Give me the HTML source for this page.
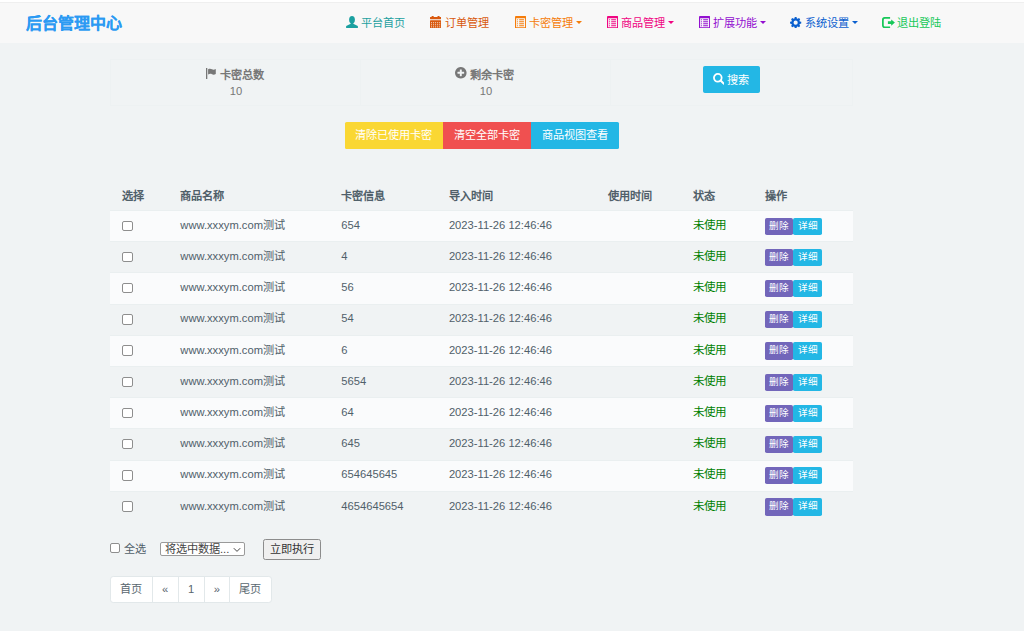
<!DOCTYPE html>
<html lang="zh-CN">
<head>
<meta charset="utf-8">
<title>后台管理中心</title>
<style>
*{box-sizing:border-box;}
html,body{margin:0;padding:0;}
body{width:1024px;height:631px;overflow:hidden;background:#f0f3f4;color:#50606a;
  font-family:"Liberation Sans",sans-serif;font-size:11.2px;line-height:16px;position:relative;}
svg{display:block;}
.topw{position:absolute;left:0;top:0;width:1024px;height:2px;background:#fff;}
.nav{position:absolute;left:0;top:2px;width:1024px;height:41.3px;background:#f8f8f8;border-top:1px solid #efefef;}
.brand{position:absolute;left:25.6px;top:9px;-webkit-text-stroke:0.1px #2b9af3;font-size:16px;line-height:24px;font-weight:bold;color:#2b9af3;white-space:nowrap;}
.ni{position:absolute;top:12px;height:16px;line-height:16px;white-space:nowrap;font-size:11.2px;}
.ni .ic{position:absolute;left:0;top:0;display:block;}
.ni span{position:absolute;left:14.6px;top:0;}
.caret{position:absolute;top:6.4px;width:0;height:0;border-top:3.2px solid;border-left:3.2px solid transparent;border-right:3.2px solid transparent;}

.stats{position:absolute;left:110px;top:59px;width:743px;height:46.5px;border:1px solid #edf1f2;}
.stats .dv{position:absolute;top:0;width:1px;height:100%;background:#edf1f2;}
.cell{position:absolute;top:0;height:46px;text-align:center;}
.cell .t{position:absolute;top:6.8px;left:0;width:100%;padding-right:2px;font-weight:bold;color:#777;white-space:nowrap;}
.cell .n{position:absolute;top:22.6px;left:0;width:100%;color:#777;}
.cell .t svg{display:inline-block;vertical-align:0px;margin-right:0;position:relative;left:-0.6px;}
.btn{display:inline-block;color:#fff;text-align:center;white-space:nowrap;border-radius:1.6px;}
.btn-info{background:#23b7e5;border:0.8px solid #23b7e5;}
.sbtn{position:absolute;left:702.8px;top:66px;width:57.3px;height:27px;line-height:25.4px;}
.sbtn svg{position:absolute;left:8.9px;top:6.2px;}
.sbtn span{position:absolute;left:23.2px;top:0.6px;}
.grp{position:absolute;left:344.8px;top:121.7px;height:27px;white-space:nowrap;font-size:0;}
.grp .btn{font-size:11.2px;height:27px;line-height:27.6px;border-radius:0;vertical-align:top;}
.grp .b1{width:98.4px;background:#fad733;border-radius:1.6px 0 0 1.6px;}
.grp .b2{width:87.6px;background:#f05050;}
.grp .b3{width:88.2px;background:#23b7e5;border-radius:0 1.6px 1.6px 0;}

table{position:absolute;left:110.3px;top:178.9px;width:742.7px;border-collapse:separate;border-spacing:0;table-layout:fixed;}
th,td{padding:0 0 0 12px;text-align:left;vertical-align:middle;white-space:nowrap;overflow:hidden;}
th{height:31.2px;font-weight:bold;color:#50606a;padding-top:3px;}
td{height:31.2px;padding-bottom:2.6px;border-top:1px solid #eaeff0;}
td:first-child,td:last-child{padding-bottom:0.6px;}
tbody tr:nth-child(odd){background:#fafbfc;}
.cb{display:block;width:10.4px;height:10.4px;border:1px solid #8e8e8e;border-radius:2px;background:#fff;}
.ok{color:green;font-size:11.5px;}
.xs{font-weight:normal;display:inline-block;vertical-align:top;height:17.2px;line-height:15.6px;font-size:9.6px;color:#fff;text-align:center;width:28.5px;}
.xs.p{background:#7266ba;border-radius:1.8px;}
.xs.i{background:#23b7e5;border-radius:1.8px;}
.ops{font-size:0;display:block;margin-top:0.7px;}

.bulk{position:absolute;left:110px;top:538px;height:22px;}
.bulk .cb{position:absolute;left:0;top:4.6px;}
.bulk .lab{position:absolute;left:13.6px;top:2.6px;white-space:nowrap;}
.sel{position:absolute;left:50.4px;top:4.2px;width:84.2px;height:14.2px;border:1px solid #9a9a9a;border-radius:2px;background:#fff;color:#444;line-height:12.2px;white-space:nowrap;overflow:hidden;}
.sel span{position:absolute;left:3.6px;top:-0.4px;}
.sel svg{position:absolute;right:3px;top:3.6px;}
.exe{position:absolute;left:153.2px;top:1px;width:57.6px;height:21px;border:1px solid #8c8c8c;border-radius:2.4px;background:#efefef;color:#333;text-align:center;line-height:19px;white-space:nowrap;}

.pg{position:absolute;left:110.2px;top:575.5px;height:27px;font-size:0;white-space:nowrap;}
.pg a{display:inline-block;vertical-align:top;height:27px;line-height:25.4px;font-size:11.2px;color:#58666e;background:#fff;border:0.8px solid #e2e8ea;margin-left:-0.8px;text-align:center;}
.pg a:first-child{margin-left:0;border-radius:3.2px 0 0 3.2px;}
.pg a:last-child{border-radius:0 3.2px 3.2px 0;}

</style>
</head>
<body>
<div class="topw"></div>
<div class="nav">
<div class="brand">后台管理中心</div>
<div class="ni" style="left:346.2px;color:#1ba0a0"><i class="ic" style="top:0.8px"><svg width="12" height="12.4" viewBox="0 0 12 12.4"><g fill="#1ba0a0"><ellipse cx="6" cy="3.8" rx="2.9" ry="3.8"/><path d="M.1 12.4V10.5Q.1 10 .7 9.7L4.7 7.8V6.3H7.3V7.8L11.3 9.7Q11.9 10 11.9 10.5V12.4Z"/></g></svg></i><span>平台首页</span></div>
<div class="ni" style="left:430.0px;color:#d9580d"><i class="ic" style="top:0.8px"><svg width="11.2" height="12.4" viewBox="0 0 11 12.2"><g fill="#d9580d"><rect x="1.6" y="0" width="2" height="2" rx=".5"/><rect x="7.4" y="0" width="2" height="2" rx=".5"/><rect x="0" y="0.9" width="11" height="2.2" rx=".4"/><rect x="0" y="4.2" width="11" height="8" rx=".6"/></g><rect x="1.00" y="6.10" width="1" height="1" fill="#f8f8f8" opacity=".85"/><rect x="3.00" y="6.10" width="1" height="1" fill="#f8f8f8" opacity=".85"/><rect x="5.00" y="6.10" width="1" height="1" fill="#f8f8f8" opacity=".85"/><rect x="7.00" y="6.10" width="1" height="1" fill="#f8f8f8" opacity=".85"/><rect x="9.00" y="6.10" width="1" height="1" fill="#f8f8f8" opacity=".85"/><rect x="1.00" y="8.15" width="1" height="1" fill="#f8f8f8" opacity=".85"/><rect x="3.00" y="8.15" width="1" height="1" fill="#f8f8f8" opacity=".85"/><rect x="5.00" y="8.15" width="1" height="1" fill="#f8f8f8" opacity=".85"/><rect x="7.00" y="8.15" width="1" height="1" fill="#f8f8f8" opacity=".85"/><rect x="9.00" y="8.15" width="1" height="1" fill="#f8f8f8" opacity=".85"/><rect x="1.00" y="10.20" width="1" height="1" fill="#f8f8f8" opacity=".85"/><rect x="3.00" y="10.20" width="1" height="1" fill="#f8f8f8" opacity=".85"/><rect x="5.00" y="10.20" width="1" height="1" fill="#f8f8f8" opacity=".85"/><rect x="7.00" y="10.20" width="1" height="1" fill="#f8f8f8" opacity=".85"/><rect x="9.00" y="10.20" width="1" height="1" fill="#f8f8f8" opacity=".85"/></svg></i><span>订单管理</span></div>
<div class="ni" style="left:514.9px;color:#f57c0a"><i class="ic" style="top:0.8px"><svg width="11.2" height="12.4" viewBox="0 0 11 12.2"><g fill="#f57c0a"><path fill-rule="evenodd" d="M.9 0H10.1Q11 0 11 .9V11.3Q11 12.2 10.1 12.2H.9Q0 12.2 0 11.3V.9Q0 0 .9 0ZM1.1 2.1V11.1H9.9V2.1Z"/><rect x="1.9" y="3.15" width="1.1" height="1.05" rx=".5"/><rect x="4.0" y="3.15" width="5" height="1.05" rx=".5"/><rect x="1.9" y="5.15" width="1.1" height="1.05" rx=".5"/><rect x="4.0" y="5.15" width="5" height="1.05" rx=".5"/><rect x="1.9" y="7.15" width="1.1" height="1.05" rx=".5"/><rect x="4.0" y="7.15" width="5" height="1.05" rx=".5"/><rect x="1.9" y="9.15" width="1.1" height="1.05" rx=".5"/><rect x="4.0" y="9.15" width="5" height="1.05" rx=".5"/></g></svg></i><span>卡密管理</span><i class="caret" style="left:61.6px"></i></div>
<div class="ni" style="left:606.9px;color:#f00582"><i class="ic" style="top:0.8px"><svg width="11.2" height="12.4" viewBox="0 0 11 12.2"><g fill="#f00582"><path fill-rule="evenodd" d="M.9 0H10.1Q11 0 11 .9V11.3Q11 12.2 10.1 12.2H.9Q0 12.2 0 11.3V.9Q0 0 .9 0ZM1.1 2.1V11.1H9.9V2.1Z"/><rect x="1.9" y="3.15" width="1.1" height="1.05" rx=".5"/><rect x="4.0" y="3.15" width="5" height="1.05" rx=".5"/><rect x="1.9" y="5.15" width="1.1" height="1.05" rx=".5"/><rect x="4.0" y="5.15" width="5" height="1.05" rx=".5"/><rect x="1.9" y="7.15" width="1.1" height="1.05" rx=".5"/><rect x="4.0" y="7.15" width="5" height="1.05" rx=".5"/><rect x="1.9" y="9.15" width="1.1" height="1.05" rx=".5"/><rect x="4.0" y="9.15" width="5" height="1.05" rx=".5"/></g></svg></i><span>商品管理</span><i class="caret" style="left:61.6px"></i></div>
<div class="ni" style="left:698.9px;color:#930fd0"><i class="ic" style="top:0.8px"><svg width="11.2" height="12.4" viewBox="0 0 11 12.2"><g fill="#930fd0"><path fill-rule="evenodd" d="M.9 0H10.1Q11 0 11 .9V11.3Q11 12.2 10.1 12.2H.9Q0 12.2 0 11.3V.9Q0 0 .9 0ZM1.1 2.1V11.1H9.9V2.1Z"/><rect x="1.9" y="3.15" width="1.1" height="1.05" rx=".5"/><rect x="4.0" y="3.15" width="5" height="1.05" rx=".5"/><rect x="1.9" y="5.15" width="1.1" height="1.05" rx=".5"/><rect x="4.0" y="5.15" width="5" height="1.05" rx=".5"/><rect x="1.9" y="7.15" width="1.1" height="1.05" rx=".5"/><rect x="4.0" y="7.15" width="5" height="1.05" rx=".5"/><rect x="1.9" y="9.15" width="1.1" height="1.05" rx=".5"/><rect x="4.0" y="9.15" width="5" height="1.05" rx=".5"/></g></svg></i><span>扩展功能</span><i class="caret" style="left:61.6px"></i></div>
<div class="ni" style="left:790.4px;color:#0b60cf"><i class="ic" style="top:1.5px"><svg width="11.3" height="11.3" viewBox="0 0 11.3 11.3"><path fill="#0b60cf" fill-rule="evenodd" d="M4.39 1.54L4.81 0.06L6.49 0.06L6.91 1.54L7.67 1.85L9.01 1.11L10.19 2.29L9.45 3.63L9.76 4.39L11.24 4.81L11.24 6.49L9.76 6.91L9.45 7.67L10.19 9.01L9.01 10.19L7.67 9.45L6.91 9.76L6.49 11.24L4.81 11.24L4.39 9.76L3.63 9.45L2.29 10.19L1.11 9.01L1.85 7.67L1.54 6.91L0.06 6.49L0.06 4.81L1.54 4.39L1.85 3.63L1.11 2.29L2.29 1.11L3.63 1.85ZM3.55 5.65A2.10 2.10 0 1 0 7.75 5.65A2.10 2.10 0 1 0 3.55 5.65Z"/></svg></i><span>系统设置</span><i class="caret" style="left:61.6px"></i></div>
<div class="ni" style="left:882.1px;color:#16c858"><i class="ic" style="top:1.8px"><svg width="13" height="11.2" viewBox="0 0 13 11.2"><g fill="#16c858"><path d="M8.1 0H2.6Q0 0 0 2.6V8.6Q0 11.2 2.6 11.2H8.1V9.5H2.9Q1.75 9.5 1.75 8.3V2.9Q1.75 1.7 2.9 1.7H8.1Z"/><path d="M5.9 4.15H9.2V2.4L12.9 5.55L9.2 8.7V6.95H5.9Z"/></g></svg></i><span>退出登陆</span></div>
</div>

<div class="stats">
<div class="dv" style="left:249px"></div>
<div class="dv" style="left:498.6px"></div>
<div class="cell" style="left:0;width:250px"><div class="t"><svg width="10.4" height="11.2" viewBox="0 0 10.4 11.2"><g fill="#777"><rect x="0" y="0" width="1.3" height="11"/><path d="M2.1 1.3C3.6 .5 4.8 .7 6 1.3C7.2 1.9 8.4 1.7 9.8 .9V6C8.4 6.9 7.2 6.9 6 6.3C4.8 5.7 3.6 5.7 2.1 6.5Z"/></g></svg> 卡密总数</div><div class="n">10</div></div>
<div class="cell" style="left:250px;width:250px"><div class="t"><svg width="11.6" height="11.6" viewBox="0 -128 1536 1536"><path fill="#777" transform="translate(0,1280) scale(1,-1)" d="M1216 576V704Q1216 730 1197.0 749.0Q1178 768 1152 768H896V1024Q896 1050 877.0 1069.0Q858 1088 832 1088H704Q678 1088 659.0 1069.0Q640 1050 640 1024V768H384Q358 768 339.0 749.0Q320 730 320 704V576Q320 550 339.0 531.0Q358 512 384 512H640V256Q640 230 659.0 211.0Q678 192 704 192H832Q858 192 877.0 211.0Q896 230 896 256V512H1152Q1178 512 1197.0 531.0Q1216 550 1216 576ZM1433.0 1025.5Q1536 849 1536.0 640.0Q1536 431 1433.0 254.5Q1330 78 1153.5 -25.0Q977 -128 768.0 -128.0Q559 -128 382.5 -25.0Q206 78 103.0 254.5Q0 431 0.0 640.0Q0 849 103.0 1025.5Q206 1202 382.5 1305.0Q559 1408 768.0 1408.0Q977 1408 1153.5 1305.0Q1330 1202 1433.0 1025.5Z"/></svg> 剩余卡密</div><div class="n">10</div></div>
</div>
<div class="btn btn-info sbtn"><svg width="11.8" height="11.6" viewBox="0 0 11.8 11.6"><circle cx="4.8" cy="4.8" r="3.85" fill="none" stroke="#fff" stroke-width="1.8"/><path d="M7.6 7.6L10.7 10.6" stroke="#fff" stroke-width="2.1" stroke-linecap="round"/></svg><span>搜索</span></div>

<div class="grp"><span class="btn b1">清除已使用卡密</span><span class="btn b2">清空全部卡密</span><span class="btn b3">商品视图查看</span></div>

<table>
<colgroup><col style="width:58px"><col style="width:161px"><col style="width:107.6px"><col style="width:158.9px"><col style="width:85.6px"><col style="width:71.6px"><col></colgroup>
<thead><tr><th>选择</th><th>商品名称</th><th>卡密信息</th><th>导入时间</th><th>使用时间</th><th>状态</th><th>操作</th></tr></thead>
<tbody>
<tr><td><i class="cb"></i></td><td>www.xxxym.com测试</td><td>654</td><td>2023-11-26 12:46:46</td><td></td><td class="ok">未使用</td><td><span class="ops"><b class="xs p">删除</b><b class="xs i">详细</b></span></td></tr>
<tr><td><i class="cb"></i></td><td>www.xxxym.com测试</td><td>4</td><td>2023-11-26 12:46:46</td><td></td><td class="ok">未使用</td><td><span class="ops"><b class="xs p">删除</b><b class="xs i">详细</b></span></td></tr>
<tr><td><i class="cb"></i></td><td>www.xxxym.com测试</td><td>56</td><td>2023-11-26 12:46:46</td><td></td><td class="ok">未使用</td><td><span class="ops"><b class="xs p">删除</b><b class="xs i">详细</b></span></td></tr>
<tr><td><i class="cb"></i></td><td>www.xxxym.com测试</td><td>54</td><td>2023-11-26 12:46:46</td><td></td><td class="ok">未使用</td><td><span class="ops"><b class="xs p">删除</b><b class="xs i">详细</b></span></td></tr>
<tr><td><i class="cb"></i></td><td>www.xxxym.com测试</td><td>6</td><td>2023-11-26 12:46:46</td><td></td><td class="ok">未使用</td><td><span class="ops"><b class="xs p">删除</b><b class="xs i">详细</b></span></td></tr>
<tr><td><i class="cb"></i></td><td>www.xxxym.com测试</td><td>5654</td><td>2023-11-26 12:46:46</td><td></td><td class="ok">未使用</td><td><span class="ops"><b class="xs p">删除</b><b class="xs i">详细</b></span></td></tr>
<tr><td><i class="cb"></i></td><td>www.xxxym.com测试</td><td>64</td><td>2023-11-26 12:46:46</td><td></td><td class="ok">未使用</td><td><span class="ops"><b class="xs p">删除</b><b class="xs i">详细</b></span></td></tr>
<tr><td><i class="cb"></i></td><td>www.xxxym.com测试</td><td>645</td><td>2023-11-26 12:46:46</td><td></td><td class="ok">未使用</td><td><span class="ops"><b class="xs p">删除</b><b class="xs i">详细</b></span></td></tr>
<tr><td><i class="cb"></i></td><td>www.xxxym.com测试</td><td>654645645</td><td>2023-11-26 12:46:46</td><td></td><td class="ok">未使用</td><td><span class="ops"><b class="xs p">删除</b><b class="xs i">详细</b></span></td></tr>
<tr><td><i class="cb"></i></td><td>www.xxxym.com测试</td><td>4654645654</td><td>2023-11-26 12:46:46</td><td></td><td class="ok">未使用</td><td><span class="ops"><b class="xs p">删除</b><b class="xs i">详细</b></span></td></tr>
</tbody>
</table>

<div class="bulk">
<i class="cb"></i><span class="lab">全选</span>
<div class="sel"><span>将选中数据...</span><svg width="8" height="6" viewBox="0 0 8 6"><path d="M.8 1.2L4 4.4L7.2 1.2" fill="none" stroke="#444" stroke-width="1"/></svg></div>
<div class="exe">立即执行</div>
</div>

<div class="pg"><a style="width:42.4px">首页</a><a style="width:26.8px">«</a><a style="width:26.8px">1</a><a style="width:26px">»</a><a style="width:42.8px">尾页</a></div>
</body>
</html>
